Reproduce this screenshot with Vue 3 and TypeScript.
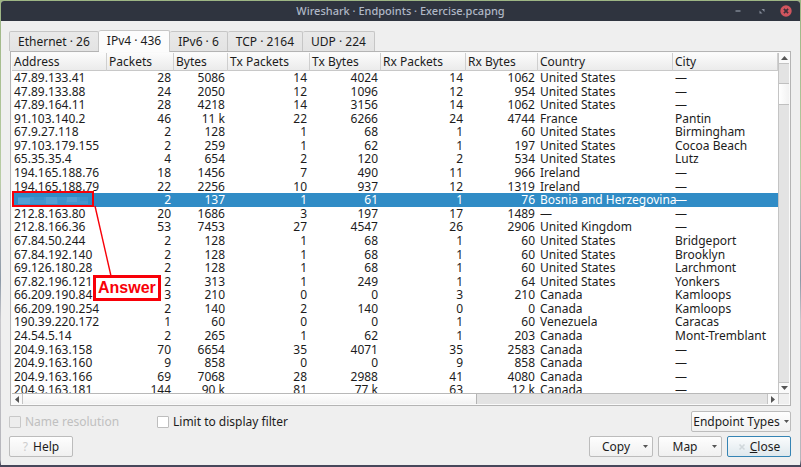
<script setup lang="ts">
import { ref } from 'vue'

const tabs = ['Ethernet · 26', 'IPv4 · 436', 'IPv6 · 6', 'TCP · 2164', 'UDP · 224']
const activeTab = ref(1)

const columns = [
  'Address', 'Packets', 'Bytes', 'Tx Packets', 'Tx Bytes',
  'Rx Packets', 'Rx Bytes', 'Country', 'City',
]

const rows: string[][] = [
  ['47.89.133.41', '28', '5086', '14', '4024', '14', '1062', 'United States', '—'],
  ['47.89.133.88', '24', '2050', '12', '1096', '12', '954', 'United States', '—'],
  ['47.89.164.11', '28', '4218', '14', '3156', '14', '1062', 'United States', '—'],
  ['91.103.140.2', '46', '11 k', '22', '6266', '24', '4744', 'France', 'Pantin'],
  ['67.9.27.118', '2', '128', '1', '68', '1', '60', 'United States', 'Birmingham'],
  ['97.103.179.155', '2', '259', '1', '62', '1', '197', 'United States', 'Cocoa Beach'],
  ['65.35.35.4', '4', '654', '2', '120', '2', '534', 'United States', 'Lutz'],
  ['194.165.188.76', '18', '1456', '7', '490', '11', '966', 'Ireland', '—'],
  ['194.165.188.79', '22', '2256', '10', '937', '12', '1319', 'Ireland', '—'],
  ['', '2', '137', '1', '61', '1', '76', 'Bosnia and Herzegovina', '—'],
  ['212.8.163.80', '20', '1686', '3', '197', '17', '1489', '—', '—'],
  ['212.8.166.36', '53', '7453', '27', '4547', '26', '2906', 'United Kingdom', '—'],
  ['67.84.50.244', '2', '128', '1', '68', '1', '60', 'United States', 'Bridgeport'],
  ['67.84.192.140', '2', '128', '1', '68', '1', '60', 'United States', 'Brooklyn'],
  ['69.126.180.28', '2', '128', '1', '68', '1', '60', 'United States', 'Larchmont'],
  ['67.82.196.121', '2', '313', '1', '249', '1', '64', 'United States', 'Yonkers'],
  ['66.209.190.84', '3', '210', '0', '0', '3', '210', 'Canada', 'Kamloops'],
  ['66.209.190.254', '2', '140', '2', '140', '0', '0', 'Canada', 'Kamloops'],
  ['190.39.220.172', '1', '60', '0', '0', '1', '60', 'Venezuela', 'Caracas'],
  ['24.54.5.14', '2', '265', '1', '62', '1', '203', 'Canada', 'Mont-Tremblant'],
  ['204.9.163.158', '70', '6654', '35', '4071', '35', '2583', 'Canada', '—'],
  ['204.9.163.160', '9', '858', '0', '0', '9', '858', 'Canada', '—'],
  ['204.9.163.166', '69', '7068', '28', '2988', '41', '4080', 'Canada', '—'],
  ['204.9.163.181', '144', '90 k', '81', '77 k', '63', '12 k', 'Canada', '—'],
]
const selectedRow = 9
const limit = ref(false)
</script>

<template>
  <div class="desktop">
    <main class="window">
      <header class="titlebar">
        <h1>Wireshark · Endpoints · Exercise.pcapng</h1>
        <div class="window-buttons">
          <button type="button" aria-label="Minimize">
            <svg width="12" height="12" viewBox="0 0 12 12"><path d="M3.5 6h5" stroke="#a4abb9" stroke-width="1.2" /></svg>
          </button>
          <button type="button" aria-label="Maximize">
            <svg width="12" height="12" viewBox="0 0 12 12"><path d="M5.5 4H8.5V7zM3.5 5.5V8.5H6.5z" fill="#868c9a" /></svg>
          </button>
          <button type="button" aria-label="Close window">
            <svg width="12" height="12" viewBox="0 0 12 12">
              <circle cx="6" cy="6" r="5.7" fill="#d0555e" />
              <path d="M3.9 3.9l4.2 4.2M8.1 3.9l-4.2 4.2" stroke="#3d303b" stroke-width="1.7" />
            </svg>
          </button>
        </div>
      </header>

      <section class="content">
        <div class="tabs" role="tablist">
          <button
            v-for="(tab, i) in tabs"
            :key="tab"
            type="button"
            role="tab"
            class="tab"
            :class="{ active: i === activeTab }"
            :aria-selected="i === activeTab"
            @click="activeTab = i"
          >{{ tab }}</button>
        </div>

        <div class="pane">
          <div class="view">
            <table>
              <thead>
                <tr><th v-for="c in columns" :key="c" scope="col">{{ c }}</th></tr>
              </thead>
              <tbody>
                <tr v-for="(row, r) in rows" :key="r" :class="{ selected: r === selectedRow }">
                  <td v-for="(cell, c) in row" :key="c" :class="{ num: c > 0 && c < 7 }">{{ cell }}</td>
                </tr>
              </tbody>
            </table>
            <svg class="callout-line" width="20" height="72" viewBox="0 0 20 72">
              <path d="M1 1L17 71" stroke="#f80008" stroke-width="1.4" />
            </svg>
            <div class="marked">
              <svg width="78" height="12" viewBox="0 0 78 12">
                <path fill="#4496cf" d="M4 4h70v7H4z" />
                <path fill="#539fd4" d="M4 5h12v6H4zM32 4h11v7H32zM53 4h10v5H53z" />
                <path fill="#3c91cb" d="M20 4h10v3H20zM44 7h8v4h-8zM66 4h8v4h-8z" />
              </svg>
            </div>
            <div class="callout">Answer</div>
          </div>
          <div class="vbar">
            <button type="button" class="step up" aria-label="Scroll up"><svg width="7" height="4" viewBox="0 0 7 4"><path d="M3.5 0L7 4H0z" fill="#555" /></svg></button>
            <div class="vtrack"><div class="vthumb"></div></div>
            <button type="button" class="step down" aria-label="Scroll down"><svg width="7" height="4" viewBox="0 0 7 4"><path d="M0 0H7L3.5 4z" fill="#555" /></svg></button>
          </div>
          <div class="hbar">
            <button type="button" class="step left" aria-label="Scroll left"><svg width="4" height="7" viewBox="0 0 4 7"><path d="M4 0V7L0 3.5z" fill="#555" /></svg></button>
            <div class="htrack"><div class="hthumb"></div></div>
            <button type="button" class="step right" aria-label="Scroll right"><svg width="4" height="7" viewBox="0 0 4 7"><path d="M0 0L4 3.5 0 7z" fill="#555" /></svg></button>
          </div>
          <div class="corner"></div>
        </div>

        <div class="options">
          <label class="check name disabled"><input type="checkbox" disabled />Name resolution</label>
          <label class="check"><input v-model="limit" type="checkbox" />Limit to display filter</label>
          <button type="button" class="btn types">Endpoint Types<svg class="arrow" width="5" height="3" viewBox="0 0 5 3"><path d="M0 0H5L2.5 3z" fill="#555" /></svg></button>
        </div>

        <footer class="actions">
          <button type="button" class="btn help"><span class="faint">?</span>Help</button>
          <button type="button" class="btn menu">Copy<svg class="arrow" width="5" height="3" viewBox="0 0 5 3"><path d="M0 0H5L2.5 3z" fill="#555" /></svg></button>
          <button type="button" class="btn menu">Map<svg class="arrow" width="5" height="3" viewBox="0 0 5 3"><path d="M0 0H5L2.5 3z" fill="#555" /></svg></button>
          <button type="button" class="btn close">
            <svg width="8" height="8" viewBox="0 0 8 8"><path d="M1.5 1.5l5 5M6.5 1.5l-5 5" stroke="#d0d7db" stroke-width="1.6" /></svg>
            <span><u>C</u>lose</span>
          </button>
        </footer>
      </section>
    </main>
  </div>
</template>

<style>
body {
  margin: 0;
}
</style>

<style scoped>
* {
  box-sizing: border-box;
}
.desktop {
  height: 100vh;
  padding: 1px 1px 2px;
  background: linear-gradient(#9db584 0, #b9cda6 180px, #b5b8b8 210px, #8d9aa8 280px, #c8c8cc 320px, #b5b5bb 460px, #47475a 465px);
  font: 12px/14px "Noto Sans", "Open Sans", sans-serif;
  color: #1c1c1c;
}
button {
  font: inherit;
  color: inherit;
  padding: 0;
  margin: 0;
}
.window {
  height: 100%;
  display: flex;
  flex-direction: column;
  background: #efefef;
  border-radius: 3px 3px 0 0;
  overflow: hidden;
}
.titlebar {
  flex: none;
  height: 20px;
  display: grid;
  grid-template-columns: 1fr auto 1fr;
  align-items: center;
  background: #2f343f;
  color: #b0b8c6;
}
h1 {
  grid-column: 2;
  margin: 0;
  font-size: 11px;
  font-weight: 500;
  line-height: 20px;
}
.window-buttons {
  display: flex;
  justify-content: flex-end;
  gap: 12px;
  padding-right: 8px;
}
.window-buttons button {
  display: flex;
  border: 0;
  background: none;
}
.content {
  flex: 1;
  min-height: 0;
  display: flex;
  flex-direction: column;
  padding: 9px 9px 8px 8px;
}
.tabs {
  display: flex;
  align-items: flex-end;
}
.tab {
  height: 20px;
  padding: 0 8px;
  border: 1px solid #c6c6c6;
  border-left-width: 0;
  border-bottom: 0;
  border-radius: 2px 2px 0 0;
  background: linear-gradient(#e9e9e9, #e3e3e3);
}
.tab:first-child {
  border-left-width: 1px;
}
.tab.active {
  height: 22px;
  margin-bottom: -1px;
  padding-bottom: 1px;
  background: #fcfcfc;
  z-index: 1;
}
.pane {
  flex: 1;
  min-height: 0;
  margin-left: 1px;
  border: 1px solid #b4b4b4;
  padding: 1px;
  background: #fafafa;
  display: grid;
  grid-template-columns: minmax(0, 1fr) 11px;
  grid-template-rows: minmax(0, 1fr) 11px;
}
.view {
  position: relative;
  overflow: hidden;
  background: #fff;
}
table {
  height: 100%;
  display: flex;
  flex-direction: column;
}
thead {
  flex: none;
  display: block;
}
tr {
  display: grid;
  grid-template-columns: 95px 67px 54px 82px 71px 85px 72px 135px minmax(0, 1fr);
}
th {
  height: 18px;
  padding: 0 2px;
  font-weight: 400;
  line-height: 17px;
  text-align: left;
  white-space: nowrap;
  background: linear-gradient(#fcfcfc, #ebebeb);
  border-right: 1px solid #cfcfcf;
  border-bottom: 1px solid #c8c8c8;
}
tbody {
  flex: none;
  height: calc(100% - 14px);
  display: grid;
  grid-auto-rows: minmax(0, 1fr);
}
td {
  padding: 0 2px;
  line-height: 13px;
  white-space: nowrap;
}
.num {
  padding-right: 3px;
  text-align: right;
}
.selected {
  background: #308cc6;
  color: #fff;
}
.marked {
  position: absolute;
  left: 0;
  top: 138px;
  width: 82px;
  height: 16px;
  border: 2px solid #f80008;
  background: #308cc6;
}
.marked svg {
  display: block;
}
.callout-line {
  position: absolute;
  left: 82px;
  top: 152px;
}
.callout {
  position: absolute;
  left: 81px;
  top: 222px;
  height: 26px;
  padding: 0 2px;
  border: 3px solid #f80008;
  background: #fff;
  color: #f80008;
  font: bold 16px/20px "Liberation Sans", Arial, sans-serif;
}
.vbar {
  display: flex;
  flex-direction: column;
  border-left: 1px solid #c4c4c4;
  background: #e3e3e3;
}
.step {
  flex: none;
  display: flex;
  align-items: center;
  justify-content: center;
  border: 0 solid #c4c4c4;
  background: #fafafa;
}
.up {
  height: 11px;
  border-bottom-width: 1px;
}
.down {
  height: 11px;
  border-top-width: 1px;
}
.vtrack {
  flex: 1;
}
.vthumb {
  height: 7%;
  margin-top: 19px;
  border: 1px solid #c0c0c0;
  border-width: 1px 0;
  background: linear-gradient(90deg, #fff, #f2f2f2);
}
.hbar {
  display: flex;
  border-top: 1px solid #b8b8b8;
  background: #e3e3e3;
}
.left {
  width: 11px;
  border-right-width: 1px;
}
.right {
  width: 11px;
  border-left-width: 1px;
}
.htrack {
  flex: 1;
}
.hthumb {
  width: 61%;
  height: 100%;
  border-right: 1px solid #b4b4b4;
  background: linear-gradient(#fff, #f2f2f2);
}
.corner {
  border: 1px solid #c4c4c4;
  border-width: 1px 0 0 1px;
  background: #efefef;
}
.options {
  flex: none;
  display: flex;
  align-items: center;
  margin-top: 5px;
}
.check {
  display: flex;
  align-items: center;
  gap: 4px;
}
.check input {
  appearance: none;
  width: 12px;
  height: 12px;
  margin: 0;
  border: 1px solid #bdbdbd;
  border-radius: 1px;
  background: #fff;
}
.check input:checked {
  background: #308cc6;
}
.check.name {
  width: 148px;
}
.check.disabled {
  color: #c0c0c0;
}
.check.disabled input {
  background: #ededed;
  border-color: #c8c8c8;
}
.btn {
  position: relative;
  height: 21px;
  border: 1px solid #bcbcbc;
  border-radius: 2px;
  background: linear-gradient(#fefefe, #f0f0f0);
  display: flex;
  align-items: center;
  justify-content: center;
  white-space: nowrap;
}
.types {
  margin-left: auto;
  gap: 4px;
  width: 100px;
}
.actions {
  flex: none;
  display: flex;
  gap: 5px;
  margin-top: 4px;
}
.actions .btn {
  width: 64px;
}
.actions .help {
  margin-right: auto;
  gap: 5px;
}
.faint {
  color: #cdcdcd;
}
.actions .menu {
  padding-right: 10px;
}
.menu .arrow {
  position: absolute;
  right: 4px;
  top: 8px;
}
.actions .close {
  gap: 4px;
  border-color: #3584b4;
  background: linear-gradient(#fafcfd, #dfe8ed);
}
</style>
